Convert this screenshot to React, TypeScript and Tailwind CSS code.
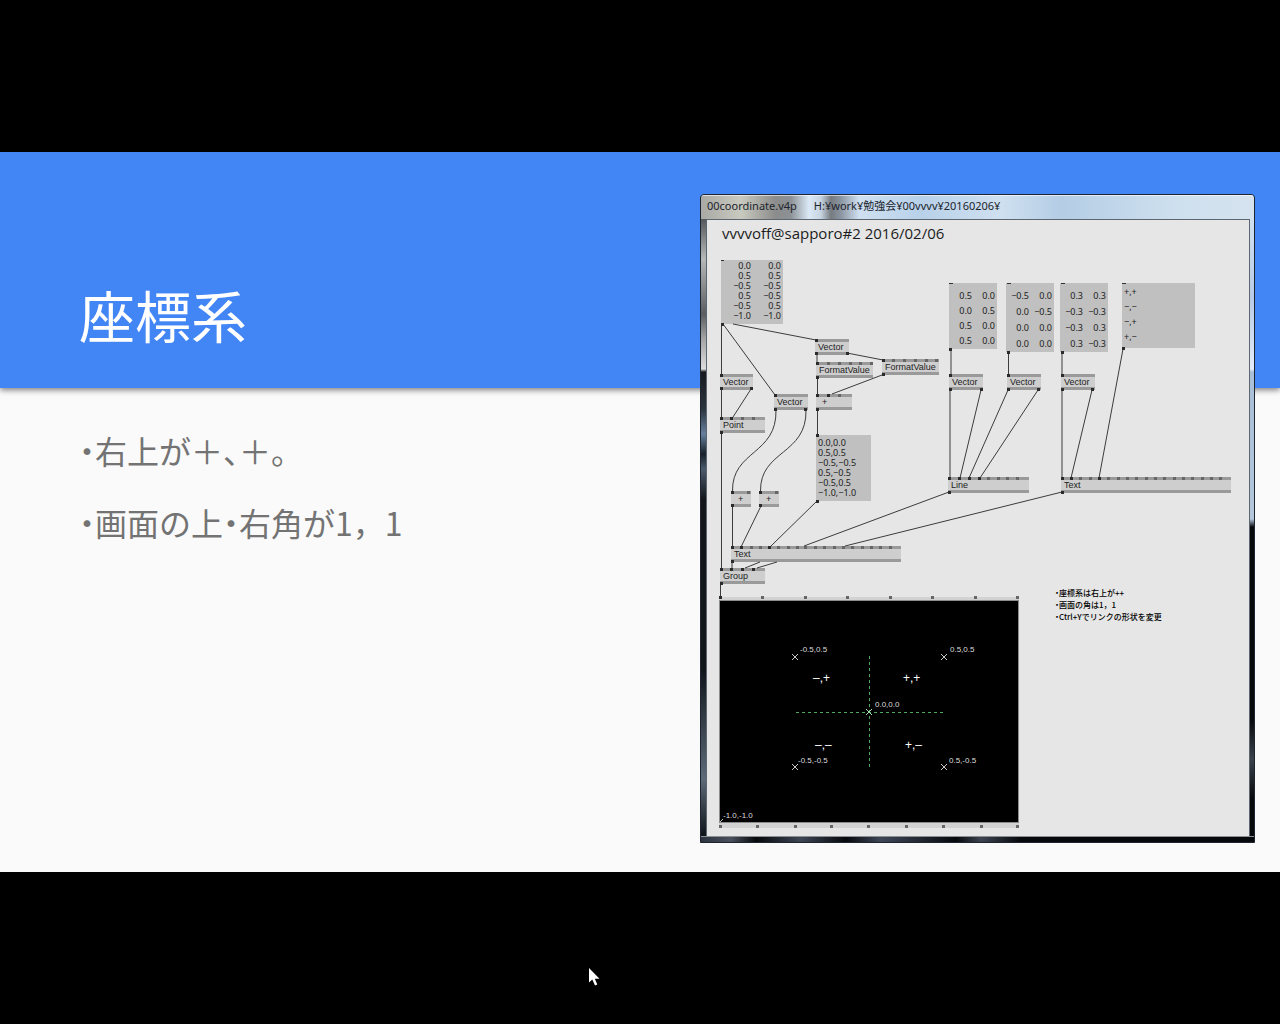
import React from "react";

type Align = "left" | "right";

const sans = "font-['Liberation_Sans',Arial,sans-serif]";
const noto = "font-['Noto_Sans','Noto_Sans_CJK_JP',sans-serif]";
const cjk = "font-['Noto_Sans_CJK_JP',sans-serif]";

const nodes = [
  { label: "Vector", place: "left-[13px] top-[154px] w-[33px]" },
  { label: "Point", place: "left-[13px] top-[197px] w-[45px]" },
  { label: "Vector", place: "left-[67px] top-[174px] w-[34px]" },
  { label: "Vector", place: "left-[108px] top-[119px] w-[34px]" },
  { label: "FormatValue", place: "left-[109px] top-[142px] w-[57px]" },
  { label: "FormatValue", place: "left-[175px] top-[139px] w-[57px]" },
  { label: "+", place: "left-[109px] top-[174px] w-[36px] pl-[6px]" },
  { label: "+", place: "left-[24px] top-[271px] w-[20px] pl-[7px]" },
  { label: "+", place: "left-[52px] top-[271px] w-[20px] pl-[7px]" },
  { label: "Text", place: "left-[24px] top-[326px] w-[170px]" },
  { label: "Group", place: "left-[13px] top-[348px] w-[45px]" },
  { label: "Vector", place: "left-[242px] top-[154px] w-[34px]" },
  { label: "Vector", place: "left-[300px] top-[154px] w-[34px]" },
  { label: "Vector", place: "left-[354px] top-[154px] w-[34px]" },
  { label: "Line", place: "left-[241px] top-[257px] w-[81px]" },
  { label: "Text", place: "left-[354px] top-[257px] w-[170px]" },
];

const spreads: { name: string; place: string; row: string; align: Align; rows: string[][] }[] = [
  {
    name: "Points",
    place: "left-[14px] top-[40px] w-[62px] h-[64px] pt-[1px] pr-[2px]",
    row: "h-[10px] leading-[10px]",
    align: "right",
    rows: [["0.0", "0.0"], ["0.5", "0.5"], ["−0.5", "−0.5"], ["0.5", "−0.5"], ["−0.5", "0.5"], ["−1.0", "−1.0"]],
  },
  {
    name: "Line start",
    place: "left-[242px] top-[63px] w-[48px] h-[66px] pt-[5px] pr-[2px]",
    row: "h-[15px] leading-[15px]",
    align: "right",
    rows: [["0.5", "0.0"], ["0.0", "0.5"], ["0.5", "0.0"], ["0.5", "0.0"]],
  },
  {
    name: "Line end",
    place: "left-[299px] top-[63px] w-[48px] h-[69px] pt-[5px] pr-[2px]",
    row: "h-[16px] leading-[16px]",
    align: "right",
    rows: [["−0.5", "0.0"], ["0.0", "−0.5"], ["0.0", "0.0"], ["0.0", "0.0"]],
  },
  {
    name: "Text position",
    place: "left-[353px] top-[63px] w-[48px] h-[69px] pt-[5px] pr-[2px]",
    row: "h-[16px] leading-[16px]",
    align: "right",
    rows: [["0.3", "0.3"], ["−0.3", "−0.3"], ["−0.3", "0.3"], ["0.3", "−0.3"]],
  },
  {
    name: "Text labels",
    place: "left-[415px] top-[63px] w-[73px] h-[65px] pt-[1px] pl-[2px]",
    row: "h-[15px] leading-[15px]",
    align: "left",
    rows: [["+,+"], ["−,−"], ["−,+"], ["+,−"]],
  },
  {
    name: "Formatted points",
    place: "left-[109px] top-[215px] w-[55px] h-[66px] pt-[3px] pl-[2px]",
    row: "h-[10px] leading-[10px]",
    align: "left",
    rows: [["0.0,0.0"], ["0.5,0.5"], ["−0.5,−0.5"], ["0.5,−0.5"], ["−0.5,0.5"], ["−1.0,−1.0"]],
  },
];

const links = [
  "M721.500 324V375", "M723 324L775 395", "M733 324L816 340", "M721.500 389V418", "M751 389L733 417",
  "M721.500 432V569", "M776 410C777 455 732 450 732.500 491", "M806 410C807 455 760 450 760.500 491",
  "M817 354V363", "M847 353L883 360", "M817.500 378V395", "M882 375L832 394", "M817.500 410V436",
  "M732.500 506V547", "M761 506L741 547", "M817 501L771 546", "M949 492L804 546", "M1062 492L845 546",
  "M732 562V569", "M760 562L745 568", "M777 562L757 568", "M720.500 584V598",
  "M951 349V375", "M1008.500 352V375", "M1062 352V375", "M1123 349L1099 478",
  "M950 390V478", "M981 390L960 478", "M1008 390L969 478", "M1038 390L980 478",
  "M1062 390V478", "M1092 390L1071 478",
];

const darkPins = [
  [721, 323], [720, 374], [720, 387], [750, 387], [720, 417], [730, 417], [720, 431], [774, 394],
  [774, 408], [804, 408], [815, 339], [815, 352], [846, 352], [816, 362], [816, 376], [882, 359],
  [882, 373], [816, 394], [827, 394], [816, 408], [816, 434], [816, 500], [731, 491], [759, 491],
  [731, 504], [759, 504], [731, 546], [740, 546], [768, 546], [731, 560], [720, 568], [730, 568],
  [741, 568], [752, 568], [720, 582], [719, 596], [949, 348], [1007, 351], [1061, 351], [1122, 347],
  [949, 374], [949, 388], [980, 388], [1007, 374], [1007, 388], [1037, 388], [1061, 374], [1061, 388],
  [1091, 388], [948, 477], [958, 477], [968, 477], [978, 477], [948, 491], [1061, 477], [1070, 477],
  [1098, 477], [1061, 491],
];

const greyPins = [
  [741, 417], [752, 417], [827, 362], [838, 362], [849, 362], [859, 362], [870, 362], [892, 359],
  [903, 359], [914, 359], [925, 359], [935, 359], [838, 394], [747, 491], [775, 491],
  [750, 546], [759, 546], [777, 546], [787, 546], [796, 546], [804, 546], [814, 546], [823, 546],
  [833, 546], [842, 546], [851, 546], [861, 546], [870, 546], [879, 546], [889, 546],
  [987, 477], [997, 477], [1006, 477], [1016, 477],
  [1079, 477], [1089, 477], [1107, 477], [1117, 477], [1126, 477], [1135, 477], [1145, 477],
  [1154, 477], [1163, 477], [1173, 477], [1182, 477], [1191, 477], [1201, 477], [1210, 477], [1219, 477],
  [761, 596], [804, 596], [846, 596], [889, 596], [931, 596], [974, 596], [1016, 596],
  [719, 825], [756, 825], [794, 825], [830, 825], [867, 825], [905, 825], [942, 825], [980, 825], [1016, 825],
];

const renderLabels = [
  { text: "-0.5,0.5", place: "left-[80px] top-[44px]" },
  { text: "0.5,0.5", place: "left-[230px] top-[44px]" },
  { text: "0.0,0.0", place: "left-[155px] top-[99px]" },
  { text: "-0.5,-0.5", place: "left-[78px] top-[155px]" },
  { text: "0.5,-0.5", place: "left-[229px] top-[155px]" },
  { text: "-1.0,-1.0", place: "left-[3px] top-[210px]" },
];

const quadrants = [
  { text: "–,+", place: "left-[93px] top-[70px]" },
  { text: "+,+", place: "left-[183px] top-[70px]" },
  { text: "–,–", place: "left-[95px] top-[137px]" },
  { text: "+,–", place: "left-[185px] top-[137px]" },
];

function Half({ children }: { children: string }) {
  return <span className="[font-feature-settings:'halt']">{children}</span>;
}

function Renderer() {
  return (
    <div className="absolute left-[12px] top-[377px] h-[231px] w-[300px] border-t-[3px] border-b-[5px] border-[#d2d2d2]">
      <div className="relative h-full border border-[#8c8c8c] bg-black text-[#dcdcdc]">
        <svg className="absolute inset-0 h-full w-full" viewBox="720 601 298 221" fill="none" aria-hidden="true">
          <path d="M796 712.500H945M869.500 656V768" stroke="#4fa85c" strokeDasharray="3 3" />
          <path
            d="M792 654l6 6m0-6l-6 6M941 654l6 6m0-6l-6 6M792 764l6 6m0-6l-6 6M941 764l6 6m0-6l-6 6M720 822l3-3"
            stroke="#c8c8c8"
          />
          <path d="M866 709l6 6m0-6l-6 6" stroke="#a5e0ac" />
        </svg>
        {renderLabels.map((l) => (
          <span key={l.place} className={`absolute text-[8px] leading-[10px] ${sans} ${l.place}`}>{l.text}</span>
        ))}
        {quadrants.map((l) => (
          <span key={l.place} className={`absolute text-[12px] leading-[14px] text-white ${sans} ${l.place}`}>{l.text}</span>
        ))}
      </div>
    </div>
  );
}

function Patch() {
  return (
    <div className={`relative h-[616px] overflow-hidden bg-[#e6e6e6] text-[#1c1c1c] ${sans}`}>
      <h2 className="absolute left-[15px] top-[3px] font-['Open_Sans',sans-serif] text-[15px] leading-[20px] whitespace-nowrap">
        vvvvoff@sapporo#2 2016/02/06
      </h2>
      {spreads.map((s) => (
        <div key={s.name} className={`absolute bg-[#c0c0c0] ${s.place}`}>
          <table aria-label={s.name} className={`w-full table-fixed border-collapse text-[9px] ${noto}`}>
            <tbody>
              {s.rows.map((r, i) => (
                <tr key={i}>
                  {r.map((v, j) => (
                    <td key={j} className={`p-0 ${s.row} ${s.align === "right" ? "text-right" : "text-left"}`}>{v}</td>
                  ))}
                </tr>
              ))}
            </tbody>
          </table>
        </div>
      ))}
      {nodes.map((n) => (
        <div
          key={n.place}
          className={`absolute h-[16px] border-y-[3px] border-[#9a9a9a] bg-[#cecece] pl-[3px] text-[9px] leading-[10px] ${n.place}`}
        >
          {n.label}
        </div>
      ))}
      <Renderer />
      <svg className="absolute left-0 top-0 h-[616px] w-[542px]" viewBox="707 220 542 616" fill="none" aria-hidden="true">
        {links.map((d) => (
          <path key={d} d={d} stroke="#3c3c3c" />
        ))}
        {greyPins.map(([x, y]) => (
          <rect key={`${x}-${y}`} x={x} y={y} width="3" height="3" fill="#666" />
        ))}
        {darkPins.map(([x, y]) => (
          <rect key={`${x}-${y}`} x={x} y={y} width="3" height="3" fill="#2b2b2b" />
        ))}
        <path d="M721 260.500h3M949 283.500h4M1007 283.500h4M1061 283.500h4M1122 283.500h4" stroke="#333" />
      </svg>
      <ul className={`absolute left-[348px] top-[367px] text-[8px] font-medium leading-[12px] whitespace-nowrap text-black ${cjk}`}>
        <li><Half>・</Half>座標系は右上が++</li>
        <li><Half>・</Half>画面の角は1，1</li>
        <li><Half>・</Half>Ctrl+Yでリンクの形状を変更</li>
      </ul>
    </div>
  );
}

function PatchWindow() {
  return (
    <article className="absolute right-[25px] top-[42px] w-[555px] overflow-hidden rounded-t-sm border border-[#1d2530] bg-[#1d2530]">
      <header
        className={`flex h-[24px] items-start gap-[17px] border-t border-white/60 bg-[linear-gradient(90deg,#a9a9a5_0,#c9cabf_40px,#8b8c8b_75px,#8d9297_90px,#dbe9f7_108px,#c6d3e0_120px,#777b80_130px,#8b96a2_140px,#cfe0f1_158px,#b8d1e9_220px,#cfe0f0_300px,#b4cde5_360px,#cddfee_470px,#d6e3ef_555px)] pl-[6px] text-[11px] leading-[20px] whitespace-nowrap text-[#20242c] ${noto}`}
      >
        <span>00coordinate.v4p</span>
        <span>H:¥work¥勉強会¥00vvvv¥20160206¥</span>
      </header>
      <div className="flex">
        <div className="w-[5px] bg-[linear-gradient(180deg,#55575a_0,#b7b8b8_40px,#858789_70px,#5b5d60_95px,#a5a5a5_120px,#dcdcdc_150px,#16191d_153px,#2b333d_190px,#67809c_215px,#18202a_235px,#4b5a6b_250px,#12161b_280px,#10151a_450px,#5d6a78_560px,#10151a_616px)]" />
        <div className="flex-1 border-t border-l border-r border-[#5c6670]">
          <Patch />
        </div>
        <div className="w-[4px] bg-[linear-gradient(180deg,#cfe0ee_0,#b8cbe6_80px,#e4ecf8_150px,#a9bfd8_153px,#b4c7db_300px,#07090b_308px,#07090b_500px,#3a424b_540px,#07090b_580px)]" />
      </div>
      <div className="h-[6px] border-t border-[#8b9095] bg-[linear-gradient(90deg,#2c343e_0,#4a505c_30px,#06080b_55px,#3e4654_100px,#06080b_145px,#3f4757_180px,#1a1e26_230px,#06080b_255px,#3d4450_280px,#06080b_320px,#06080b_100%)]" />
    </article>
  );
}

export default function App() {
  return (
    <main className="relative flex min-h-screen items-center overflow-hidden bg-black">
      <section className="relative flex min-h-[720px] w-full flex-col bg-[#fafafa]">
        <header className="relative flex h-[236px] items-end bg-[#4285f4] px-[79px] pb-[40px] shadow-[0_2px_6px_rgba(0,0,0,0.5)]">
          <h1 className={`text-[56px] leading-[68px] text-white ${cjk}`}>座標系</h1>
        </header>
        <ul className={`flex flex-1 flex-col gap-[24px] px-[79px] pt-[38px] text-[32px] leading-[48px] text-[#737373] ${cjk}`}>
          <li><Half>・</Half>右上が＋<Half>、</Half>＋<Half>。</Half></li>
          <li><Half>・</Half>画面の上<Half>・</Half>右角が1，1</li>
        </ul>
        <PatchWindow />
      </section>
      <svg className="absolute left-[588px] top-[967px] h-[20px] w-[13px]" viewBox="0 0 13 20" aria-hidden="true">
        <path d="M1 1V15.500L4.300 12.500L7 18.500L9.300 17.500L6.800 11.700H11.500Z" fill="#fff" />
      </svg>
    </main>
  );
}
